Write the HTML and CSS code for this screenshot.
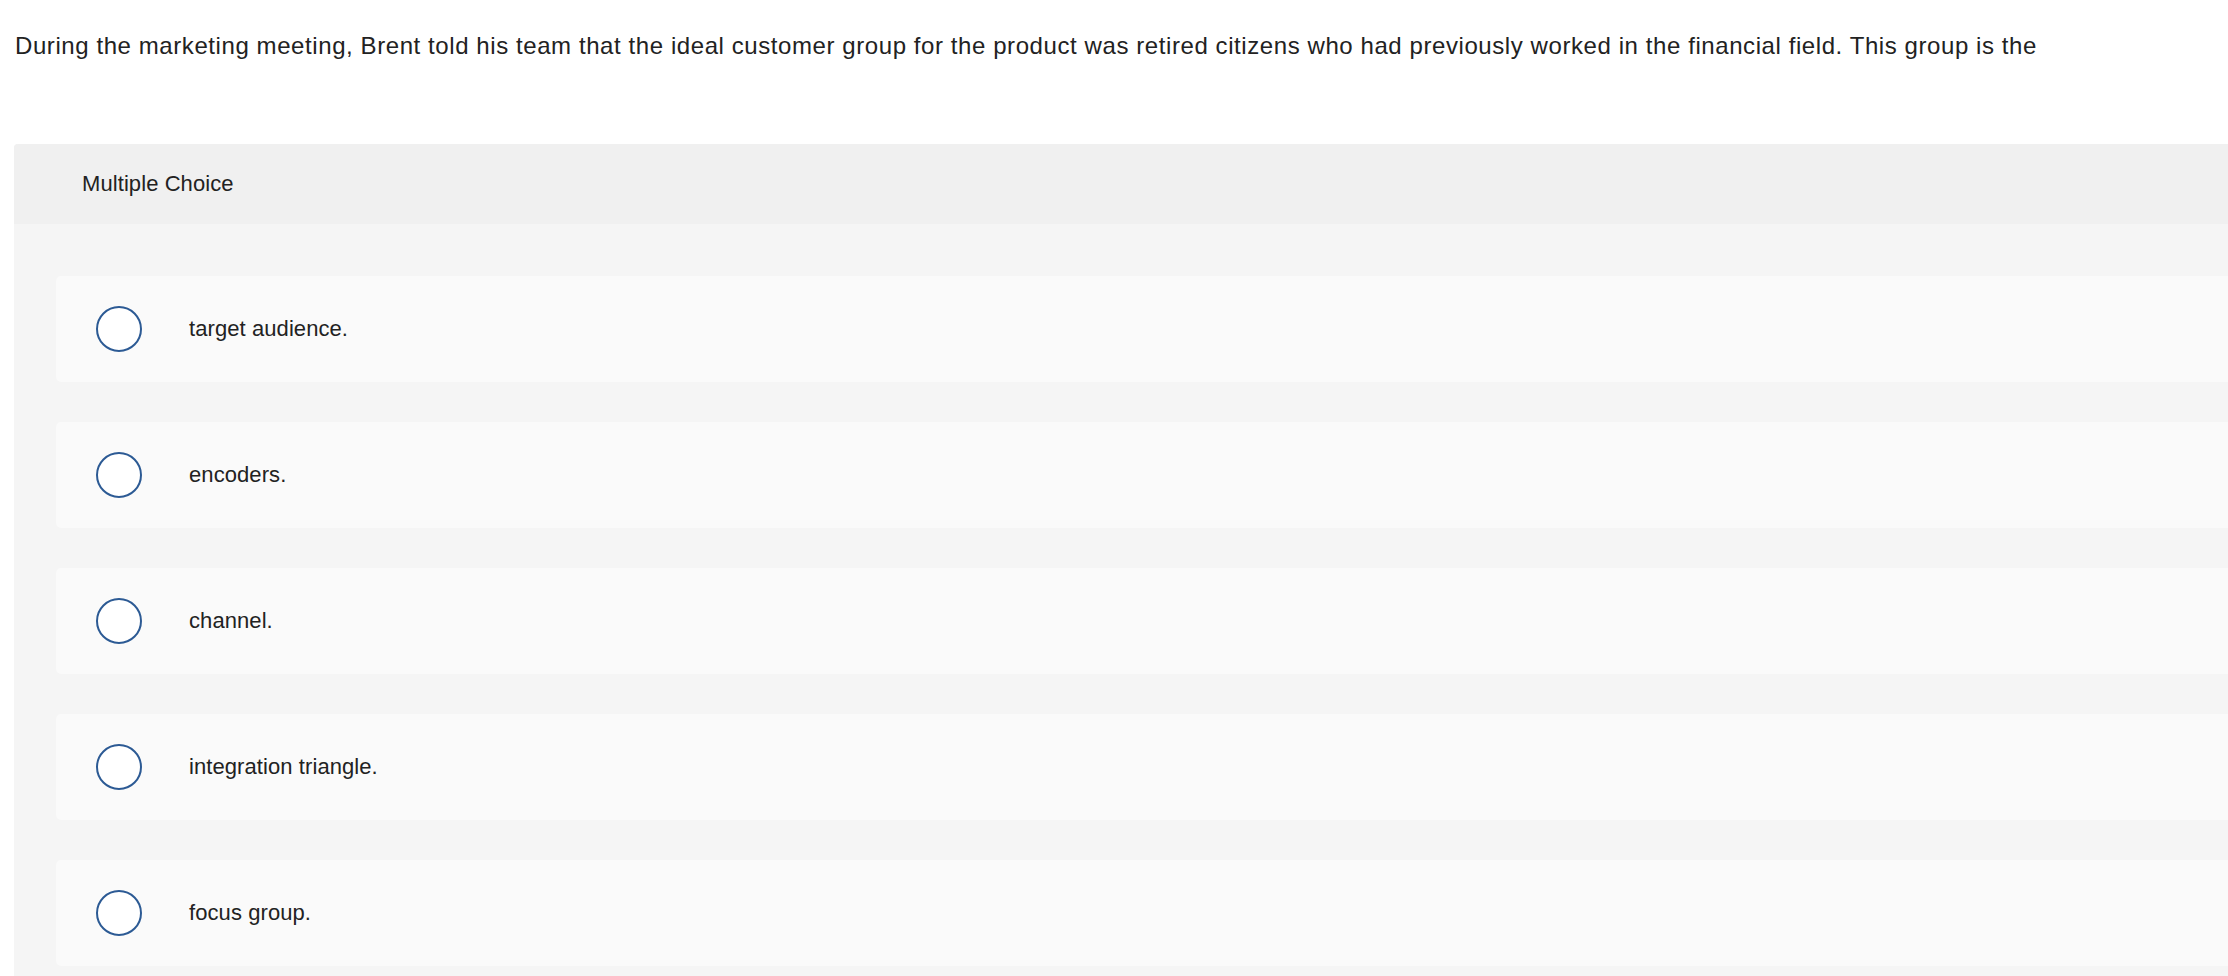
FILE: index.html
```html
<!DOCTYPE html>
<html lang="en">
<head>
<meta charset="utf-8">
<title>Multiple Choice</title>
<link rel="stylesheet" href="styles.css">
</head>
<body>
<div class="page">
  <p class="question">During the marketing meeting, Brent told his team that the ideal customer group for the product was retired citizens who had previously worked in the financial field. This group is the</p>
  <section class="mc">
    <header class="mc-head">Multiple Choice</header>
    <div class="mc-body">
      <label class="option"><span class="radio"></span><span class="option-text">target audience.</span></label>
      <label class="option"><span class="radio"></span><span class="option-text">encoders.</span></label>
      <label class="option"><span class="radio"></span><span class="option-text">channel.</span></label>
      <label class="option"><span class="radio"></span><span class="option-text">integration triangle.</span></label>
      <label class="option"><span class="radio"></span><span class="option-text">focus group.</span></label>
    </div>
  </section>
</div>
</body>
</html>
```
FILE: styles.css
```css
html, body {
  margin: 0;
  padding: 0;
  background: #ffffff;
  overflow: hidden;
}
body {
  font-family: "Liberation Sans", Arial, sans-serif;
  color: #222222;
}
.page {
  padding: 32px 0 0 14px;
  width: 2255px;
}
.question {
  margin: 0;
  font-size: 24px;
  line-height: 28px;
  white-space: nowrap;
  letter-spacing: 0.58px;
  padding-left: 1px;
}
.mc {
  margin-top: 84px;
  background: #f5f5f5;
  border-radius: 4px 4px 0 0;
  overflow: hidden;
}
.mc-head {
  height: 80px;
  display: flex;
  align-items: center;
  padding-left: 68px;
  background: #f0f0f0;
  font-size: 22px;
  letter-spacing: 0.08px;
  color: #222222;
}
.mc-body {
  padding: 52px 0 40px 42px;
  display: flex;
  flex-direction: column;
  gap: 40px;
}
.option {
  height: 106px;
  display: flex;
  align-items: center;
  padding-left: 40px;
  background: #fafafa;
  border-radius: 5px;
}
.radio {
  box-sizing: border-box;
  width: 46px;
  height: 46px;
  border: 2px solid #2c5a94;
  border-radius: 50%;
  background: #ffffff;
  flex: none;
}
.option-text {
  margin-left: 47px;
  font-size: 22px;
  letter-spacing: 0.08px;
  color: #222222;
}
```
